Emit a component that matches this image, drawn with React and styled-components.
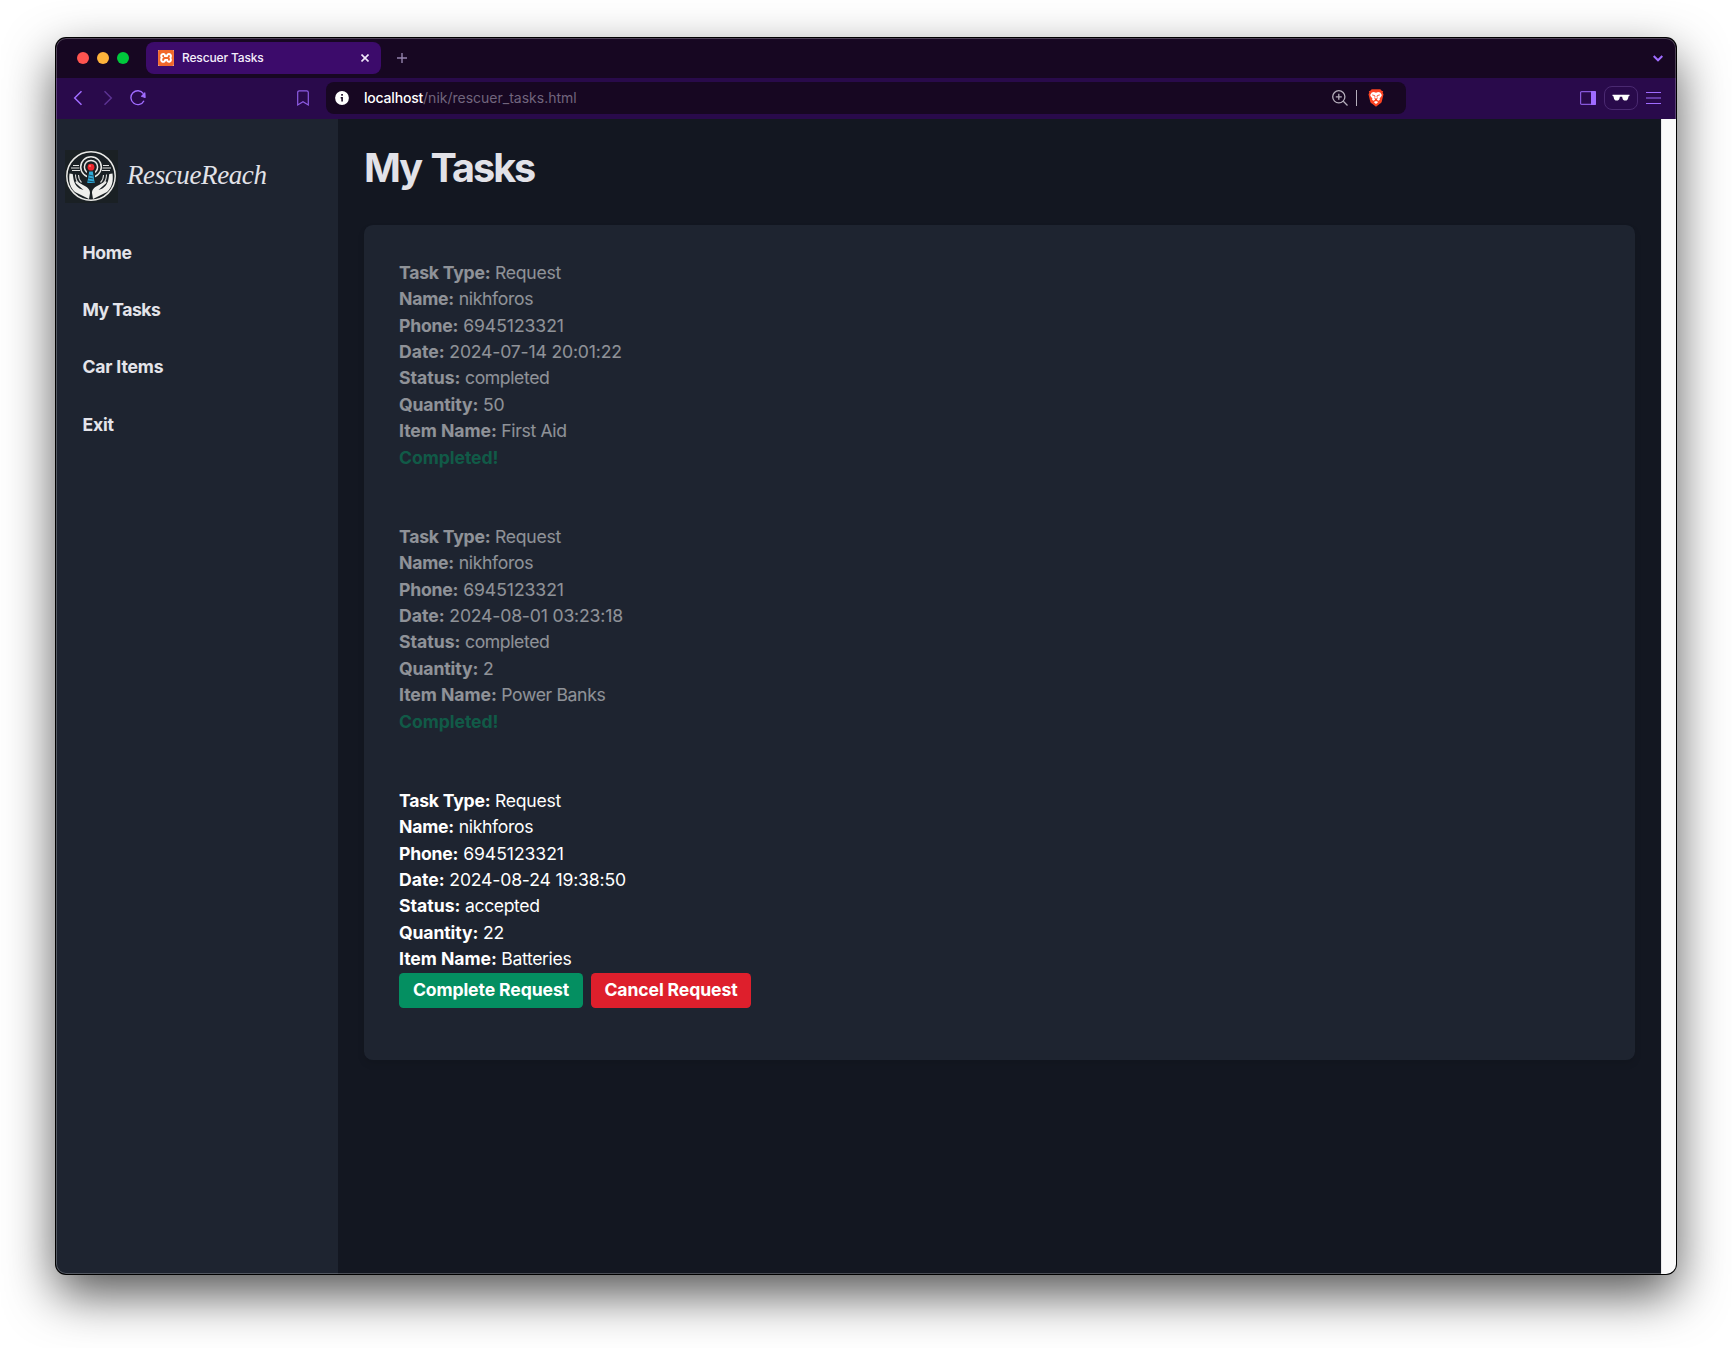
import React from "react";
import styled, { createGlobalStyle } from "styled-components";
import { SiXampp } from "react-icons/si";

const GlobalStyle = createGlobalStyle`
  *, *::before, *::after { box-sizing: border-box; }
  html, body { margin: 0; background: #fff; }
  body { font-family: Inter, "Liberation Sans", sans-serif; overflow: hidden; }
  svg { display: block; flex: none; }
`;

const Desktop = styled.div`
  height: 1348px;
  padding: 38px 56px 74px;
  background: #fff;
`;

const Window = styled.div`
  position: relative;
  display: flex;
  flex-direction: column;
  height: 1236px;
  border-radius: 10px;
  overflow: hidden;
  background: #131721;
  box-shadow: 0 0 0 1px #000, 0 20px 50px rgba(0, 0, 0, 0.68);
  &::after {
    content: "";
    position: absolute;
    inset: 0;
    border-radius: 10px;
    pointer-events: none;
    box-shadow: inset 0 0 0 1px rgba(255, 255, 255, 0.24);
  }
`;

const TabBar = styled.div`
  display: flex;
  align-items: center;
  height: 40px;
  padding: 0 13px 0 21px;
  background: #170722;
`;

const Lights = styled.div`
  display: flex;
  gap: 8px;
  margin-right: 17px;
`;

const Light = styled.span`
  width: 12px;
  height: 12px;
  border-radius: 50%;
  background: ${(p) => p.$color};
`;

const Tab = styled.div`
  display: flex;
  align-items: center;
  width: 235px;
  height: 32px;
  padding: 0 12px;
  border-radius: 8px;
  background: #3c0b6b;
`;

const Favicon = styled.span`
  display: flex;
  align-items: center;
  justify-content: center;
  width: 16px;
  height: 16px;
  border-radius: 1px;
  background: #fff;
  color: #f1682b;
`;

const TabTitle = styled.span`
  flex: 1;
  margin-left: 8px;
  font-size: 12px;
  font-weight: 500;
  line-height: 16px;
  letter-spacing: -0.15px;
  color: #f4eefb;
`;

const NewTab = styled.span`
  margin-left: 16px;
`;

const Spacer = styled.span`
  flex: 1;
`;

const Toolbar = styled.div`
  display: flex;
  align-items: center;
  height: 41px;
  padding: 0 15px 1px 14px;
  background: #290a4b;
`;

const NavButtons = styled.div`
  display: flex;
  align-items: center;
  gap: 14px;
  width: 227px;
`;

const AddressBar = styled.div`
  display: flex;
  align-items: center;
  width: 1080px;
  height: 32px;
  margin-left: 17px;
  padding: 0 22px 0 9px;
  border-radius: 8px;
  background: #170722;
`;

const Url = styled.span`
  flex: 1;
  margin-left: 15px;
  font-size: 14px;
  line-height: 20px;
  color: #71657d;
`;

const Host = styled.span`
  color: #fff;
  font-weight: 500;
  letter-spacing: -0.2px;
`;

const Divider = styled.span`
  width: 1px;
  height: 16px;
  margin: 0 11px 0 8px;
  background: #b5aebb;
`;

const ToolbarEnd = styled.div`
  display: flex;
  align-items: center;
  gap: 8px;
`;

const PrivateBadge = styled.span`
  display: flex;
  align-items: center;
  justify-content: center;
  width: 34px;
  height: 24px;
  border: 1px solid #4a2971;
  border-radius: 8px;
`;

const Page = styled.div`
  display: flex;
  flex: 1;
  font-size: 17.6px;
  line-height: 26.4px;
`;

const Sidebar = styled.aside`
  width: 282px;
  padding: 31px 9px;
  background: #1e2430;
`;

const Brand = styled.div`
  display: flex;
  align-items: center;
  gap: 9px;
  height: 53px;
`;

const BrandName = styled.span`
  margin-top: -3px;
  font-family: "Monotype Corsiva", "Apple Chancery", "Liberation Serif", serif;
  font-style: italic;
  font-size: 27px;
  letter-spacing: -0.4px;
  line-height: 36px;
  color: #e2e2e8;
`;

const Nav = styled.nav`
  display: flex;
  flex-direction: column;
  gap: 8.8px;
  margin-top: 26px;
`;

const NavLink = styled.a`
  padding: 11px 17.4px;
  font-weight: 700;
  letter-spacing: ${(p) => p.$tracking}px;
  color: #e4e4ea;
`;

const Main = styled.main`
  flex: 1;
  padding: 26px;
`;

const Title = styled.h1`
  margin: 0 0 34.6px;
  padding-top: 1px;
  font-size: 39.6px;
  font-weight: 700;
  line-height: 44px;
  letter-spacing: -2px;
  word-spacing: 2px;
  color: #e2e2e8;
`;

const Card = styled.section`
  padding: 17.6px 17.4px;
  border-radius: 8.8px;
  background: #1e2430;
  box-shadow: 0 4px 7px rgba(0, 0, 0, 0.1);
`;

const Task = styled.article`
  margin-bottom: 17.6px;
  padding: 17.6px;
  color: #fff;
  opacity: ${(p) => (p.$done ? 0.5 : 1)};
  &:last-child { padding-bottom: 17px; }
`;

const Field = styled.div`
  letter-spacing: ${(p) => p.$tracking}px;
`;

const Label = styled.strong`
  font-weight: 700;
  letter-spacing: ${(p) => p.$tracking}px;
`;

const Done = styled.div`
  font-weight: 700;
  letter-spacing: -0.05px;
  color: #05905f;
`;

const Actions = styled.div`
  display: flex;
  gap: 8px;
`;

const Button = styled.button`
  width: ${(p) => p.$width}px;
  height: 35px;
  padding: 0;
  border: 0;
  border-radius: 4.4px;
  background: ${(p) => p.$color};
  color: #fff;
  font: 700 17.6px/26.4px Inter, sans-serif;
  letter-spacing: -0.1px;
  white-space: nowrap;
`;

const Scrollbar = styled.div`
  width: 15px;
  background: #fafafa;
  border-left: 1px solid #e8e8e8;
`;

const purple = "#9f6bff";

const BrandLogo = () => (
  <svg width="53" height="53" viewBox="0 0 53 53" fill="none">
    <rect width="53" height="53" fill="#1a2024" />
    <circle cx="26" cy="26" r="24.2" stroke="#e9e9e6" strokeWidth="1.5" />
    <circle cx="26" cy="17" r="10.3" stroke="#e9e9e6" strokeWidth="1.5" />
    <circle cx="26" cy="17" r="6.6" stroke="#e9e9e6" strokeWidth="1.5" />
    <path d="M22 21h8v13h-8z" fill="#1a2024" />
    <path d="M8 15.5h6M6 18h8.5M7 20.5h8M38 15.5h6M37.5 18H46M37 20.5h8" stroke="#e2e2e0" strokeWidth="1.2" />
    <path d="M24.2 21.500h3.600l1.900 11.500h-7.400z" fill="#2fa9d6" />
    <path d="M23.800 25l4.400 1M23.300 28l5 1M23 31l6 1" stroke="#173447" strokeWidth=".8" />
    <circle cx="26" cy="17.200" r="3.400" fill="#ec262b" />
    <circle cx="25" cy="16" r="1" fill="#ff7770" />
    <path d="M4.500 23.500c-1 8 .5 14 5.500 18.500L24 49l1-6c0-4-3-6-7-8l-6-3.500c-1.500-.6-2 .8-.8 2l7.300 6.500c-6-1.500-9-5.500-10-11l-.8-5z" fill="#efefec" />
    <path d="M47.500 23.500c1 8-.5 14-5.500 18.500L28 49l-1-6c0-4 3-6 7-8l6-3.500c1.500-.6 2 .8.8 2l-7.300 6.500c6-1.500 9-5.500 10-11l.8-5z" fill="#efefec" />
    <path d="M10.500 24.500c0 4 1 6.500 3 8.500M13.500 25c0 3 1 5.500 3 7.500M41.500 24.500c0 4-1 6.500-3 8.500M38.500 25c0 3-1 5.500-3 7.500" stroke="#d8d8d6" strokeWidth="1.1" />
    <path d="M26 38v11" stroke="#1a2024" strokeWidth="1.200" />
  </svg>
);

const tasks = [
  { name: "nikhforos", phone: "6945123321", date: "2024-07-14 20:01:22", status: "completed", quantity: "50", item: "First Aid" },
  { name: "nikhforos", phone: "6945123321", date: "2024-08-01 03:23:18", status: "completed", quantity: "2", item: "Power Banks" },
  { name: "nikhforos", phone: "6945123321", date: "2024-08-24 19:38:50", status: "accepted", quantity: "22", item: "Batteries" },
];

const TaskEntry = ({ task }) => {
  const done = task.status === "completed";
  // label, value, label tracking, value tracking
  const fields = [
    ["Task Type", "Request", -0.22, -0.28],
    ["Name", task.name, -0.2, -0.33],
    ["Phone", task.phone, -0.2, -0.06],
    ["Date", task.date, 0, -0.17],
    ["Status", task.status, 0, -0.38],
    ["Quantity", task.quantity, -0.12, -0.2],
    ["Item Name", task.item, -0.05, -0.36],
  ];
  return (
    <Task $done={done}>
      {fields.map(([label, value, labelTracking, valueTracking]) => (
        <Field key={label} $tracking={valueTracking}>
          <Label $tracking={labelTracking}>{label}:</Label> {value}
        </Field>
      ))}
      {done ? (
        <Done>Completed!</Done>
      ) : (
        <Actions>
          <Button $width={184} $color="#048f61">Complete Request</Button>
          <Button $width={160} $color="#de1f2c">Cancel Request</Button>
        </Actions>
      )}
    </Task>
  );
};

export default function App() {
  return (
    <Desktop>
      <GlobalStyle />
      <Window>
        <TabBar>
          <Lights>
            <Light $color="#ff5450" />
            <Light $color="#ffb33b" />
            <Light $color="#00c83c" />
          </Lights>
          <Tab>
            <Favicon><SiXampp size={16} /></Favicon>
            <TabTitle>Rescuer Tasks</TabTitle>
            <svg width="8" height="8" viewBox="0 0 8 8" stroke="#f0e8fa" strokeWidth="1.6">
              <path d="M.5.500l7 7M7.500.500l-7 7" />
            </svg>
          </Tab>
          <NewTab>
            <svg width="10" height="10" viewBox="0 0 10 10" stroke="#9483ad" strokeWidth="1.4">
              <path d="M5 0v10M0 5h10" />
            </svg>
          </NewTab>
          <Spacer />
          <svg width="10" height="7" viewBox="0 0 10 7" fill="none" stroke={purple} strokeWidth="2">
            <path d="M.7 1L5 5.300 9.300 1" />
          </svg>
        </TabBar>
        <Toolbar>
          <NavButtons>
            <svg width="16" height="16" viewBox="0 0 16 16" fill="none" stroke={purple} strokeWidth="1.5">
              <path d="M11.500 1.200L4.700 8l6.800 6.800" />
            </svg>
            <svg width="16" height="16" viewBox="0 0 16 16" fill="none" stroke="#5b3292" strokeWidth="1.5">
              <path d="M4.500 1.200L11.300 8l-6.800 6.800" />
            </svg>
            <svg width="16" height="16" viewBox="0 0 16 16" fill="none" stroke={purple} strokeWidth="1.4">
              <path d="M14 10.800A6.900 6.900 0 1 1 13.400 3.600" />
              <path d="M11.500 6.300l3.300-3.300.3 4.400z" fill={purple} strokeLinejoin="round" strokeWidth="1.200" />
            </svg>
          </NavButtons>
          <svg width="12" height="16" viewBox="0 0 12 16" fill="none" stroke={purple} strokeWidth="1.2">
            <path d="M.7 2.500Q.7.800 2.400.800h7.200q1.700 0 1.700 1.700v12.400L6 11.700.700 14.900z" opacity=".85" />
          </svg>
          <AddressBar>
            <svg width="14" height="14" viewBox="0 0 14 14">
              <circle cx="7" cy="7" r="6.900" fill="#fff" />
              <rect x="6.200" y="3" width="1.700" height="1.700" fill="#170722" />
              <path d="M5.700 6h2.200v4.600H6.300V7.400h-.6z" fill="#170722" />
            </svg>
            <Url><Host>localhost</Host>/nik/rescuer_tasks.html</Url>
            <svg width="16" height="16" viewBox="0 0 16 16" fill="none" stroke="#b5aebb" strokeWidth="1.3">
              <circle cx="6.800" cy="6.800" r="6.100" />
              <path d="M6.800 3.800v6M3.800 6.800h6M11.300 11.300l4.200 4.200" />
            </svg>
            <Divider />
            <svg width="16" height="18" viewBox="0 0 16 18">
              <path d="M3.700.300h8.600l1.400 1.500 1.500.5-.5 1.500.8 1.500-1.700 7.200c-.3 1-.8 1.500-1.700 2.100L8 17.800l-4.100-3.200c-.9-.6-1.400-1.100-1.700-2.100L.5 5.300l.8-1.500-.5-1.500 1.500-.5z" fill="#fb4322" />
              <path d="M8 3.700l2.200-.6 2 .5 1.600 2.300-.3 1.100-1.900 2.400.3 1.400-1.300 1-1.400-.9-.2-.7 1-1.700L8 8.800l-2-.3 1 1.700-.2.700-1.400.9-1.300-1 .3-1.400-1.900-2.400-.3-1.100 1.600-2.300 2-.5zM5.700 13l2.300-1 2.300 1L8 15z" fill="#fff" />
              <path d="M7.300 5h1.400v4.500H7.300z" fill="#fff" />
              <path d="M4.200 5.900l2.500.7.3 1.300M11.800 5.900l-2.500.7-.3 1.300" fill="none" stroke="#fb4322" strokeWidth=".9" />
            </svg>
          </AddressBar>
          <Spacer />
          <ToolbarEnd>
            <svg width="16" height="14" viewBox="0 0 16 14">
              <rect x=".6" y=".6" width="14.800" height="12.800" rx="1" fill="none" stroke={purple} strokeWidth="1.200" opacity=".8" />
              <path d="M11 0h4q1 0 1 1v12q0 1-1 1h-4z" fill={purple} />
            </svg>
            <PrivateBadge>
              <svg width="18" height="8" viewBox="0 0 18 8" fill="#fff">
                <path d="M.5.800h17v1.200l-.9.300-.5 2c-.4 1.600-1.200 2.300-2.700 2.300-1.700 0-2.600-.8-3-2.700L10.100 2.800H7.900l-.3 1.100c-.4 1.900-1.300 2.700-3 2.700-1.500 0-2.300-.7-2.700-2.300l-.5-2-.9-.3z" />
              </svg>
            </PrivateBadge>
            <svg width="15" height="12" viewBox="0 0 15 12" stroke={purple} strokeWidth="1.200">
              <path d="M0 .5h15M0 6h15M0 11.500h15" />
            </svg>
          </ToolbarEnd>
        </Toolbar>
        <Page>
          <Sidebar>
            <Brand>
              <BrandLogo />
              <BrandName>RescueReach</BrandName>
            </Brand>
            <Nav>
              <NavLink $tracking={-0.3}>Home</NavLink>
              <NavLink $tracking={-0.5}>My Tasks</NavLink>
              <NavLink $tracking={-0.15}>Car Items</NavLink>
              <NavLink $tracking={-0.2}>Exit</NavLink>
            </Nav>
          </Sidebar>
          <Main>
            <Title>My Tasks</Title>
            <Card>
              {tasks.map((task) => (
                <TaskEntry key={task.date} task={task} />
              ))}
            </Card>
          </Main>
          <Scrollbar />
        </Page>
      </Window>
    </Desktop>
  );
}
